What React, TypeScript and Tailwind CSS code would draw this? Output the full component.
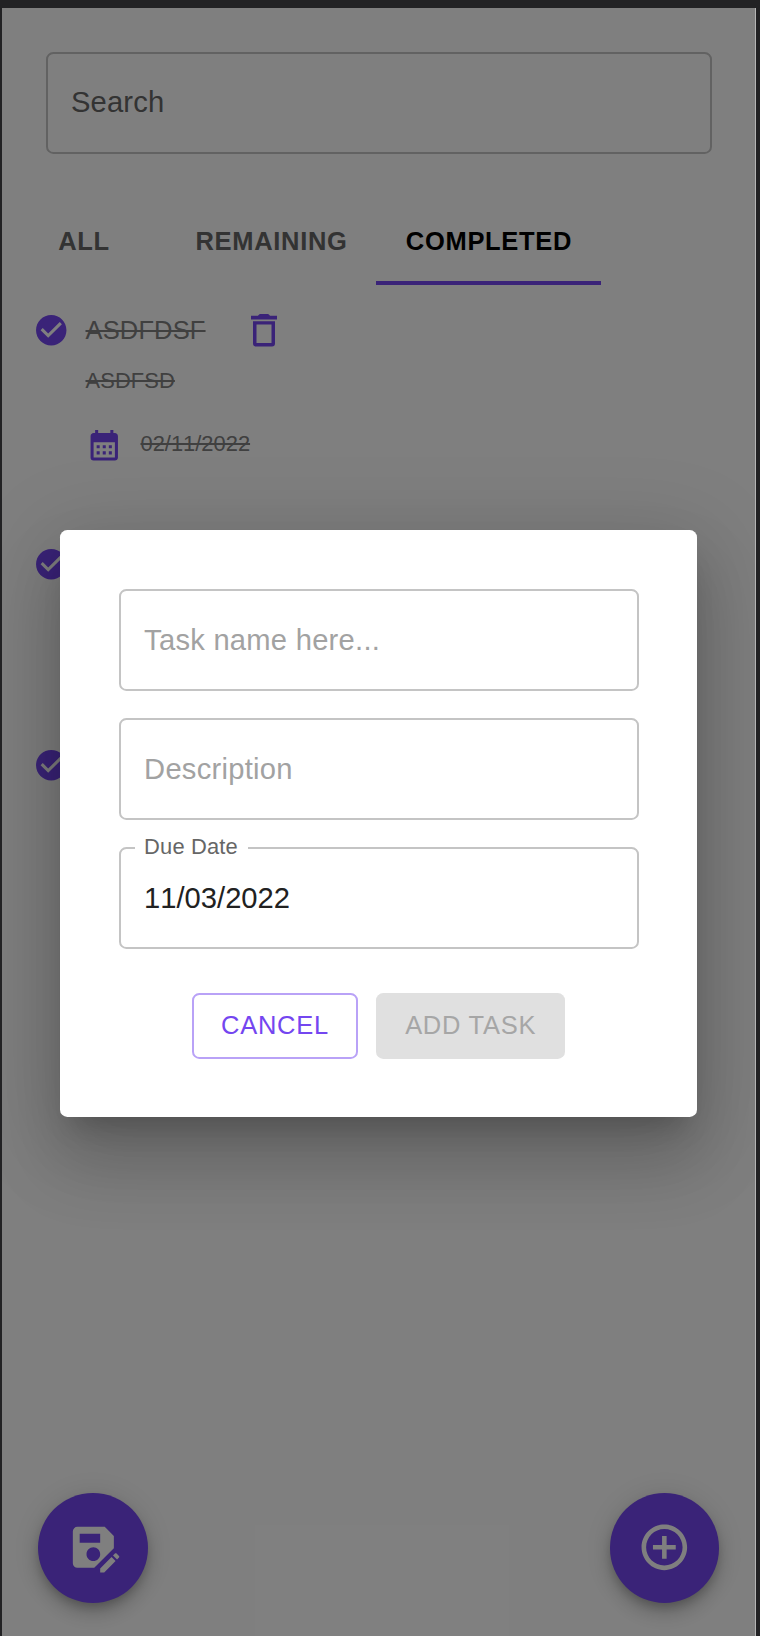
import React from "react";
import {
  MdAddCircleOutline,
  MdCalendarMonth,
  MdCheckCircle,
  MdSaveAs,
} from "react-icons/md";

const FAB_CLASS =
  "flex h-[109.4px] w-[109.4px] items-center justify-center rounded-full bg-[#7446f0] text-white shadow-[0_5.5px_9.1px_-1.8px_rgba(0,0,0,0.2),0_10.9px_18.2px_0_rgba(0,0,0,0.14),0_1.8px_32.8px_0_rgba(0,0,0,0.12)]";

function TrashIcon() {
  return (
    <svg viewBox="0 0 26 33" className="h-[33px] w-[26px] text-[#7446f0]" fill="currentColor">
      <path d="M0 1.7h7C7.8.6 8.6.1 9.6.1h6.8c1 0 1.8.5 2.6 1.6h7v3.8H0z" />
      <path
        fillRule="evenodd"
        d="M2 7.2h22v22.4a3 3 0 0 1-3 3H5a3 3 0 0 1-3-3zM5.5 10.6v18.5h15V10.6z"
      />
    </svg>
  );
}

function Tab({ label, active, className }: { label: string; active?: boolean; className: string }) {
  return (
    <button
      className={`flex h-full items-center justify-center border-b-4 pt-1 text-[25.5px] leading-8 font-bold tracking-[0.7px] ${
        active ? "border-[#7446f0] text-black" : "border-transparent text-[#666666]"
      } ${className}`}
    >
      {label}
    </button>
  );
}

interface TaskProps {
  name?: string;
  description?: string;
  date?: string;
  className: string;
}

function Task({ name, description, date, className }: TaskProps) {
  return (
    <li className={`flex items-start ${className}`}>
      <MdCheckCircle className="mt-[5px] size-[36.5px] shrink-0 text-[#7446f0]" />
      {name && (
        <div className="ml-[16px] text-[#808080] line-through">
          <div className="flex h-[46px] items-center gap-[45px] pt-[1.5px]">
            <span className="text-[25.5px] tracking-[0.15px]">{name}</span>
            <TrashIcon />
          </div>
          <p className="mt-[12.5px] text-[21.9px] leading-8 tracking-[0.1px]">{description}</p>
          <div className="mt-[29.5px] flex items-center gap-[18.5px]">
            <MdCalendarMonth className="size-[36.5px] text-[#7446f0]" />
            <span className="-mt-[1px] text-[21.9px] leading-8 [font-kerning:none]">{date}</span>
          </div>
        </div>
      )}
    </li>
  );
}

function Field({ placeholder }: { placeholder: string }) {
  return (
    <div className="flex h-[102px] items-center rounded-[7.3px] border-2 border-[#c4c4c4] px-[23.5px] pt-[2px] text-[29.17px] tracking-[0.25px] text-[#a2a2a2]">
      {placeholder}
    </div>
  );
}

export default function App() {
  return (
    <div className="relative h-[1636px] w-[760px] overflow-hidden bg-[#222224] pt-2 pr-1 pl-0.5 font-['Liberation_Sans',Arial,sans-serif]">
      <div className="h-full border-r border-[#b4b4b4]">
        <div className="relative h-full overflow-hidden bg-white">
          <main className="flex h-full flex-col">
            <div className="mt-[43.5px] mr-[43px] ml-[43.5px] flex h-[102px] shrink-0 items-center rounded-[7.3px] border-2 border-[#c4c4c4] px-[23.5px] text-[29.17px] tracking-[0.15px] text-[#666666]">
              Search
            </div>
            <nav className="mt-[43.5px] flex h-[87.5px] shrink-0">
              <Tab label="ALL" className="w-[164px]" />
              <Tab label="REMAINING" className="w-[210px] pl-[1px]" />
              <Tab label="COMPLETED" active className="w-[225px] pl-[1px]" />
            </nav>
            <ul className="mt-[22px] ml-[31px] grow">
              <Task name="ASDFDSF" description="ASDFSD" date="02/11/2022" className="h-[234px]" />
              <Task className="h-[201px]" />
              <Task className="h-[201px]" />
            </ul>
            <div className="mb-[33.5px] flex justify-between pr-[36px] pl-[36.4px]">
              <button className={FAB_CLASS} aria-label="Save">
                <MdSaveAs className="size-[54.7px]" />
              </button>
              <button className={FAB_CLASS} aria-label="Add">
                <MdAddCircleOutline className="size-[54.7px]" />
              </button>
            </div>
          </main>

          <div className="absolute inset-0 bg-black/50">
            <div
              role="dialog"
              className="mt-[522px] ml-[58.3px] h-[587.3px] w-[637px] rounded-[7.3px] bg-white px-[58.3px] pt-[58.5px] shadow-[0_20px_27.3px_-12.8px_rgba(0,0,0,0.2),0_43.8px_69.3px_5.5px_rgba(0,0,0,0.14),0_16.4px_83.9px_14.6px_rgba(0,0,0,0.12)]"
            >
              <div className="flex flex-col gap-[27.2px]">
                <Field placeholder="Task name here..." />
                <Field placeholder="Description" />
                <div className="relative flex h-[102px] items-center rounded-[7.3px] border-2 border-[#c4c4c4] px-[23.5px] pt-[2px] text-[29.17px] text-[#212121]">
                  <span className="absolute top-[-18px] left-[14px] w-[113px] bg-white pl-[9.5px] text-[21.9px] leading-8 tracking-[0.15px] whitespace-nowrap text-[#666666]">
                    Due Date
                  </span>
                  <span className="[font-kerning:none]">11/03/2022</span>
                </div>
              </div>
              <div className="mt-[44px] flex justify-center gap-[18.2px] text-[25.5px] tracking-[0.73px]">
                <button className="h-[66px] w-[165.5px] rounded-[7.3px] border-2 border-[#b9a2f7] pb-[2px] text-[#7446f0]">
                  CANCEL
                </button>
                <button className="h-[66px] w-[189.5px] rounded-[7.3px] bg-[#e0e0e0] pb-[2px] text-[#a6a6a6]">
                  ADD TASK
                </button>
              </div>
            </div>
          </div>
        </div>
      </div>
    </div>
  );
}
